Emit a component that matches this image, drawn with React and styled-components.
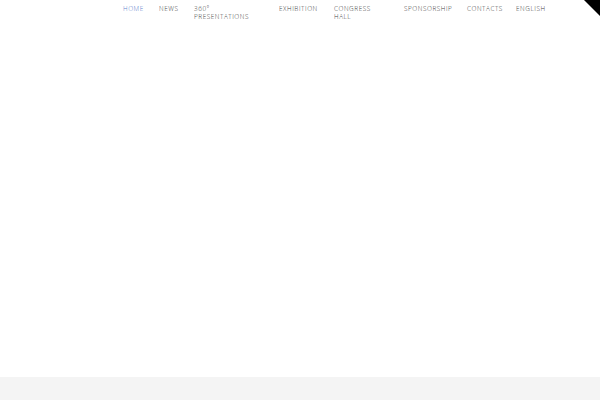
import React from "react";
import styled, { createGlobalStyle } from "styled-components";

const GlobalStyle = createGlobalStyle`
  html, body {
    margin: 0;
    padding: 0;
    background: #ffffff;
  }
  #root {
    height: 400px;
  }
`;

const Page = styled.div`
  display: flex;
  flex-direction: column;
  width: 600px;
  height: 400px;
  overflow: hidden;
  position: relative;
  font-family: "Open Sans", "Liberation Sans", sans-serif;
`;

const Header = styled.header`
  display: flex;
  padding: 5px 0 0 123px;
  height: 377px;
  box-sizing: border-box;
`;

const Nav = styled.nav`
  display: flex;
  align-items: flex-start;
`;

const NavItem = styled.a`
  display: block;
  width: ${(p) => p.$w}px;
  font-size: 6.4px;
  font-weight: 300;
  line-height: 8.4px;
  letter-spacing: 0.55px;
  text-transform: uppercase;
  color: ${(p) => (p.$active ? "#5f80cc" : "#3f3f3f")};
  text-decoration: none;
`;

const Corner = styled.div`
  position: absolute;
  top: 0;
  right: 0;
  width: 0;
  height: 0;
  border-top: 16px solid #000;
  border-left: 16px solid transparent;
`;

const Footer = styled.footer`
  flex: 1;
  background: #f4f4f4;
`;

const links = [
  { label: "Home", w: 36, active: true },
  { label: "News", w: 35 },
  { label: ["360°", "Presentations"], w: 85 },
  { label: "Exhibition", w: 55 },
  { label: ["Congress", "Hall"], w: 70 },
  { label: "Sponsorship", w: 63 },
  { label: "Contacts", w: 49 },
  { label: "English", w: 40 },
];

export default function App() {
  return (
    <Page>
      <GlobalStyle />
      <Header>
        <Nav>
          {links.map((l, i) => (
            <NavItem key={i} $w={l.w} $active={l.active} href="#">
              {Array.isArray(l.label) ? (
                <>
                  {l.label[0]}
                  <br />
                  {l.label[1]}
                </>
              ) : (
                l.label
              )}
            </NavItem>
          ))}
        </Nav>
      </Header>
      <Corner />
      <Footer />
    </Page>
  );
}
